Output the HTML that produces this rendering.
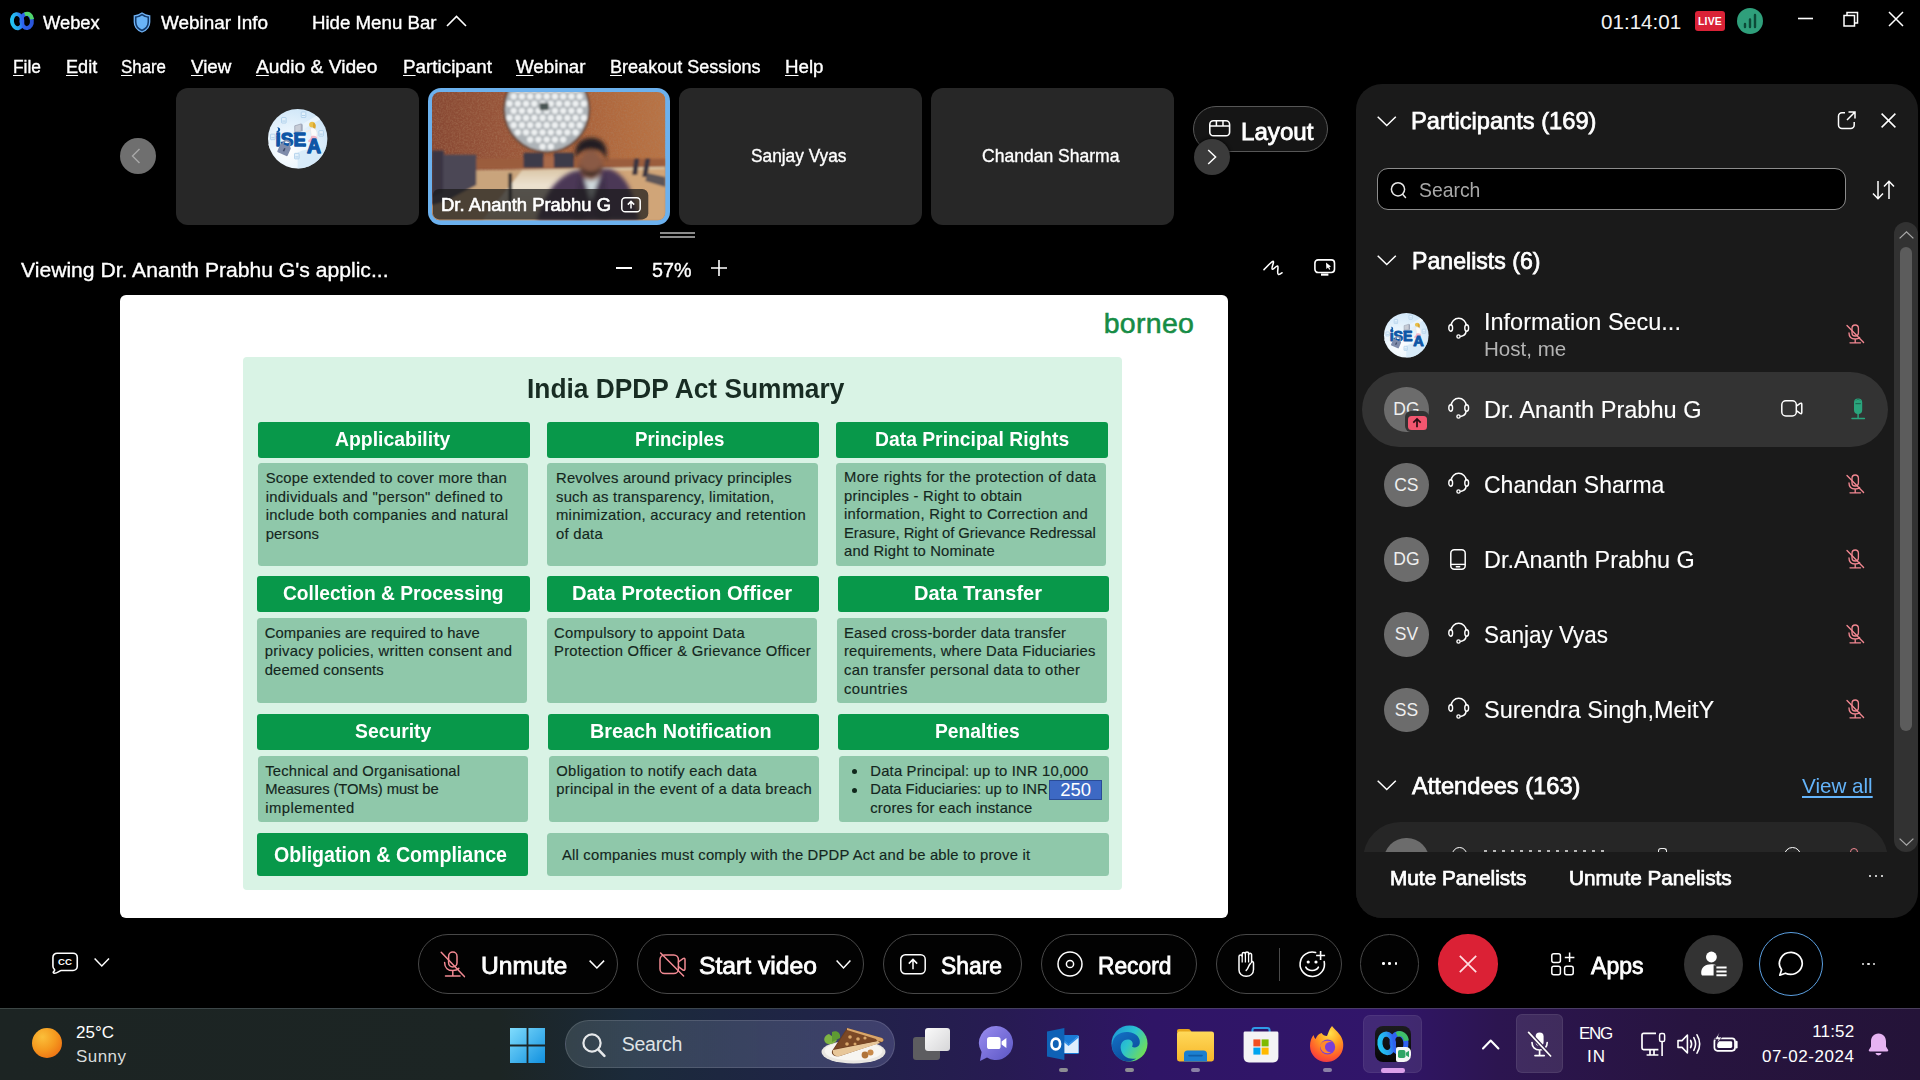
<!DOCTYPE html>
<html lang="en">
<head>
<meta charset="utf-8">
<title>Webex</title>
<style>
*{box-sizing:border-box;margin:0;padding:0}
html,body{width:1920px;height:1080px;overflow:hidden;background:#000;}
body{position:relative;font-family:"Liberation Sans",sans-serif;color:#fff;}
.a{position:absolute;white-space:nowrap;}
.t{position:absolute;white-space:nowrap;line-height:1;-webkit-text-stroke:0.35px currentColor;}
svg{position:absolute;overflow:visible;}
u{text-decoration-thickness:1.2px;text-underline-offset:2px;}

/* tiles */
.tile{position:absolute;top:88px;height:137px;width:243px;border-radius:12px;background:#272727;}
/* slide */
#slide{position:absolute;left:120px;top:295px;width:1108px;height:623px;background:#fff;border-radius:6px;overflow:hidden;}
#gbox{position:absolute;left:123.4px;top:62.2px;width:878.8px;height:532.6px;background:#d9f3e5;border-radius:4px;}
.h{position:absolute;background:#08984a;border-radius:3px;color:#fff;font-weight:bold;text-align:center;white-space:nowrap;}
.b{position:absolute;background:#8fc8aa;border-radius:3.5px;color:#10281c;}
.bt{position:absolute;white-space:nowrap;line-height:1;color:#14261d;-webkit-text-stroke:0.15px currentColor;}
.ht{position:absolute;white-space:nowrap;line-height:1;color:#fff;font-weight:bold;}

/* panel */
#panel{position:absolute;left:1356px;top:84px;width:1562px;height:834px;background:#1a1a1a;border-radius:26px;width:562px;overflow:hidden;}
.av{position:absolute;width:44px;height:44px;border-radius:50%;background:#6c6c6c;color:#efefef;font-size:17.5px;text-align:center;line-height:44px;}
.nm{position:absolute;white-space:nowrap;font-size:24.5px;line-height:1;color:#fff;-webkit-text-stroke:0.12px currentColor;}

.nb{position:absolute;white-space:nowrap;line-height:1;color:#fff;-webkit-text-stroke:0.75px #fff;}
/* controls */
.pill{position:absolute;top:934px;height:59.8px;border-radius:30px;border:1.7px solid #484848;background:#020202;}
.pl{position:absolute;white-space:nowrap;line-height:1;color:#fff;-webkit-text-stroke:0.8px #fff;}

/* taskbar */
#tb{position:absolute;left:0;top:1008px;width:1920px;height:72px;background:linear-gradient(90deg,#1c2423 0%,#1c2524 26%,#1b2a3a 33%,#1f2446 42%,#271b52 52%,#2f1566 60%,#31156a 72%,#2c1550 78%,#27143f 88%,#241338 100%);}
#tb::before{content:"";position:absolute;left:0;top:0;width:100%;height:1.3px;background:linear-gradient(90deg,#3c4644 0%,#3c4650 40%,#4a3a6c 65%,#4a3f5c 100%);}
</style>
</head>
<body>

<!-- TOPBAR -->
<div id="topbar">
<svg style="left:9px;top:11px" width="26" height="20" viewBox="0 0 26 20">
 <defs><linearGradient id="wg" x1="0" y1="0" x2="1" y2="0"><stop offset="0" stop-color="#22c3f2"/><stop offset="0.55" stop-color="#27a4ee"/><stop offset="1" stop-color="#2f62f0"/></linearGradient>
 <linearGradient id="wg2" x1="0" y1="0" x2="1" y2="0"><stop offset="0" stop-color="#2f62f0"/><stop offset="1" stop-color="#2a55d8"/></linearGradient></defs>
 <ellipse cx="17.6" cy="10" rx="5.3" ry="7.1" fill="none" stroke="url(#wg2)" stroke-width="3.9" transform="rotate(-6 17.6 10)"/>
 <path d="M15.8 3.4 C19.6 1.6 22.8 4.2 23.2 8.2" fill="none" stroke="#4fd56c" stroke-width="3.9" stroke-linecap="butt"/>
 <ellipse cx="8.2" cy="10.2" rx="5.2" ry="7.1" fill="none" stroke="url(#wg)" stroke-width="3.9" transform="rotate(-8 8.2 10.2)"/>
</svg>
<div class="t" style="transform:scaleX(1.0470);transform-origin:0 0;left:42.5px;top:15.1px;font-size:17.5px">Webex</div>
<svg style="left:133px;top:12px" width="18" height="21" viewBox="0 0 18 21"><path d="M9 1 C6.5 3 4 3.6 1.3 3.8 V10 C1.3 15 4.5 18.3 9 20 C13.5 18.3 16.7 15 16.7 10 V3.8 C14 3.6 11.5 3 9 1Z" fill="#123a6b" stroke="#6fb2f5" stroke-width="1.3"/><path d="M9 3.6 C7.2 4.9 5.5 5.5 3.5 5.7 V10 C3.5 13.7 5.7 16.2 9 17.6 C12.3 16.2 14.5 13.7 14.5 10 V5.7 C12.5 5.5 10.8 4.9 9 3.6Z" fill="#6ab4f7"/></svg>
<div class="t" style="transform:scaleX(1.0818);transform-origin:0 0;left:160.5px;top:15.1px;font-size:17.5px">Webinar Info</div>
<div class="t" style="transform:scaleX(1.0665);transform-origin:0 0;left:312.0px;top:15.1px;font-size:17.5px">Hide Menu Bar</div>
<svg style="left:446px;top:15px" width="21" height="12" viewBox="0 0 21 12"><path d="M1 11 L10.5 1.5 L20 11" fill="none" stroke="#fff" stroke-width="1.6"/></svg>
<div class="a" style="left:1601px;top:11px;font-size:20.6px;line-height:22px;color:#f2f2f2">01:14:01</div>
<div class="a" style="left:1695px;top:11px;width:30px;height:20px;border-radius:3px;background:#da2237;font-size:10.5px;font-weight:bold;line-height:20px;text-align:center;letter-spacing:0.2px">LIVE</div>
<div class="a" style="left:1737px;top:8px;width:26px;height:26px;border-radius:50%;background:#2f9f7b"></div>
<svg style="left:1743px;top:13px" width="14" height="15" viewBox="0 0 14 15"><path d="M2 14 V11 M7 14 V6.5 M12 14 V2" stroke="#0d4a38" stroke-width="2.4" stroke-linecap="round"/></svg>
<svg style="left:1798px;top:17px" width="15" height="3" viewBox="0 0 15 3"><path d="M0 1.5 H15" stroke="#fff" stroke-width="1.6"/></svg>
<svg style="left:1843px;top:11px" width="16" height="16" viewBox="0 0 16 16"><path d="M1 4.5 H11.5 V15 H1 Z M4 4.5 V1.5 H14.5 V12 H11.5" fill="none" stroke="#fff" stroke-width="1.5"/></svg>
<svg style="left:1888px;top:11px" width="16" height="16" viewBox="0 0 16 16"><path d="M1 1 L15 15 M15 1 L1 15" stroke="#fff" stroke-width="1.5"/></svg>
</div>
<!-- MENUBAR -->
<div id="menubar">
<div class="t" style="transform:scaleX(0.9922);transform-origin:0 0;left:12.5px;top:59.1px;font-size:17.5px"><u>F</u>ile</div>
<div class="t" style="transform:scaleX(1.0341);transform-origin:0 0;left:65.5px;top:59.1px;font-size:17.5px"><u>E</u>dit</div>
<div class="t" style="transform:scaleX(0.9632);transform-origin:0 0;left:121.3px;top:59.1px;font-size:17.5px"><u>S</u>hare</div>
<div class="t" style="transform:scaleX(1.0738);transform-origin:0 0;left:191.3px;top:59.1px;font-size:17.5px"><u>V</u>iew</div>
<div class="t" style="transform:scaleX(1.0983);transform-origin:0 0;left:256.0px;top:59.1px;font-size:17.5px"><u>A</u>udio &amp; Video</div>
<div class="t" style="transform:scaleX(1.0761);transform-origin:0 0;left:402.5px;top:59.1px;font-size:17.5px"><u>P</u>articipant</div>
<div class="t" style="transform:scaleX(1.0715);transform-origin:0 0;left:516.0px;top:59.1px;font-size:17.5px"><u>W</u>ebinar</div>
<div class="t" style="transform:scaleX(1.0313);transform-origin:0 0;left:610.0px;top:59.1px;font-size:17.5px"><u>B</u>reakout Sessions</div>
<div class="t" style="transform:scaleX(1.0694);transform-origin:0 0;left:785.0px;top:59.1px;font-size:17.5px"><u>H</u>elp</div>
</div>
<!-- TILES -->
<div id="tiles">
<div class="a" style="left:120px;top:138px;width:36px;height:36px;border-radius:50%;background:#6f6f6f"></div>
<svg style="left:131px;top:148px" width="10" height="16" viewBox="0 0 10 16"><path d="M8.5 1 L1.5 8 L8.5 15" fill="none" stroke="#a9a9a9" stroke-width="1.4"/></svg>
<div class="tile" style="left:176px"></div>
<svg style="left:267.7px;top:108.7px" width="59.4" height="59.4" viewBox="0 0 60 60">
 <defs><radialGradient id="ig1" cx="0.35" cy="0.7" r="0.75"><stop offset="0" stop-color="#ffffff"/><stop offset="0.45" stop-color="#eaf5fd"/><stop offset="1" stop-color="#cfe6f8"/></radialGradient><clipPath id="ic1"><circle cx="30" cy="30" r="30"/></clipPath></defs>
 <circle cx="30" cy="30" r="30" fill="url(#ig1)"/>
 <g clip-path="url(#ic1)"><path d="M-2 40 L62 2" stroke="#e9f4fc" stroke-width="5"/><path d="M30 44 C40 38 50 44 62 36 V62 H30Z" fill="#d3e8f8" opacity="0.8"/></g>
 <rect x="13.7" y="8.6" width="4.6" height="5.6" rx="0.6" fill="#e3f1fb" stroke="#9fc6e6" stroke-width="0.7"/><path d="M14.5 12.2 H17.5" stroke="#9fc6e6" stroke-width="0.8"/><rect x="33.6" y="3" width="4.6" height="5.6" rx="0.6" fill="#e3f1fb" stroke="#9fc6e6" stroke-width="0.7"/><path d="M34.4 6.6 H37.4" stroke="#9fc6e6" stroke-width="0.8"/><rect x="51.4" y="21.8" width="4.6" height="5.6" rx="0.6" fill="#e3f1fb" stroke="#9fc6e6" stroke-width="0.7"/><path d="M52.199999999999996 25.400000000000002 H55.199999999999996" stroke="#9fc6e6" stroke-width="0.8"/><rect x="2.6" y="25.4" width="4.6" height="5.6" rx="0.6" fill="#e3f1fb" stroke="#9fc6e6" stroke-width="0.7"/><path d="M3.4000000000000004 29.0 H6.4" stroke="#9fc6e6" stroke-width="0.8"/><rect x="26.8" y="44.8" width="4.6" height="5.6" rx="0.6" fill="#e3f1fb" stroke="#9fc6e6" stroke-width="0.7"/><path d="M27.6 48.4 H30.6" stroke="#9fc6e6" stroke-width="0.8"/>
 <path d="M27 17 L33.6 15 V22.4 L27 23Z" fill="#c7ccd6" stroke="#8a92a4" stroke-width="0.6"/><path d="M33.6 15 L35 15.6 V22.6 L33.6 22.4Z" fill="#9aa2b4"/>
 <path d="M26 24.6 H37.6" stroke="#0d56a6" stroke-width="1.3"/><path d="M36 24.4 L42 21.6" stroke="#f3e9e2" stroke-width="1.4"/>
 <ellipse cx="44.6" cy="15.8" rx="3" ry="2.8" fill="#e9c04a"/><path d="M45.6 14 C48.6 14 48.8 18 47.4 20.4 L45.4 19Z" fill="#d9a62e"/>
 <path d="M42.6 19.4 C46 18.4 49.6 20.4 49.6 25 L49 30 L44 30 L43.4 24Z" fill="#fbfbfb" stroke="#e2d6d6" stroke-width="0.4"/>
 <path d="M43.6 27.6 C47 26.4 50.4 27.6 49.8 30.6 C48.6 33 44 33 41 33.6 L40.4 32 C42 31 43.4 30 43.6 27.6Z" fill="#f1b6c8"/>
 <text x="7.6" y="37.8" style="font:bold 19.3px 'Liberation Sans',sans-serif" fill="#0d56a6" stroke="#0d56a6" stroke-width="1.3" stroke-linejoin="round" textLength="30.8" lengthAdjust="spacingAndGlyphs">iSE</text>
 <rect x="35.4" y="35.4" width="2.6" height="2.4" fill="#0d56a6"/>
 <text x="39.4" y="44.2" style="font:bold 19.6px 'Liberation Sans',sans-serif" fill="#0d56a6" stroke="#0d56a6" stroke-width="1.3" stroke-linejoin="round">A</text>
 <path d="M9.2 18.4 C12.8 18 13.6 22.6 10 23.4 C8.6 23.6 8 23 8 23 C10.6 22.4 10.8 19.6 9.2 18.4Z" fill="#0d56a6"/>
 <g transform="rotate(24 16.2 41)"><rect x="10.6" y="36.4" width="11.4" height="9.6" rx="1" fill="#7f8cab"/><path d="M12.8 36.6 V34.6 A3.4 3.4 0 0 1 19.6 34.6 V36.6" fill="none" stroke="#7f8cab" stroke-width="1.8"/><rect x="15.6" y="39.4" width="1.6" height="3.4" fill="#3f4a68"/></g>
</svg>
<div class="tile" id="vt" style="left:428px;width:242px;background:#6cb1ee;border-radius:13px"></div>
<svg style="left:432.3px;top:92.3px;border-radius:8.5px" width="233.4" height="128.4" viewBox="0 0 232 127" preserveAspectRatio="none">
<defs>
<linearGradient id="vw" x1="0" y1="0" x2="1" y2="0"><stop offset="0" stop-color="#874833"/><stop offset="0.3" stop-color="#98553a"/><stop offset="0.6" stop-color="#a8613b"/><stop offset="0.85" stop-color="#b46d40"/><stop offset="1" stop-color="#b87446"/></linearGradient>
<linearGradient id="vt2" x1="0" y1="0" x2="0" y2="1"><stop offset="0" stop-color="#d9c3a2"/><stop offset="0.35" stop-color="#ece2d0"/><stop offset="1" stop-color="#d8c4a4"/></linearGradient>
<filter id="vb" x="-5%" y="-5%" width="110%" height="110%"><feGaussianBlur stdDeviation="1.1"/></filter>
<filter id="vb2" x="-10%" y="-10%" width="120%" height="120%"><feGaussianBlur stdDeviation="2"/></filter>
<filter id="vn" x="0" y="0" width="100%" height="100%"><feTurbulence type="fractalNoise" baseFrequency="0.55" numOctaves="2" seed="4" result="n"/><feColorMatrix type="matrix" values="0 0 0 0 0.42  0 0 0 0 0.22  0 0 0 0 0.12  0.6 0.6 0 0 -0.5"/></filter>
<clipPath id="vc"><rect x="0" y="0" width="232" height="127" rx="8"/></clipPath>
</defs>
<g clip-path="url(#vc)">
<rect width="232" height="127" fill="url(#vw)"/>
<rect width="232" height="80" filter="url(#vn)"/>
<g filter="url(#vb)">
 <circle cx="114" cy="17" r="43.5" fill="#6b4a3a"/>
 <circle cx="114" cy="17" r="41.5" fill="#aeb4b8"/>
 <g fill="#eef1f2"><circle cx="101.7" cy="-16.9" r="3.1"/><circle cx="109.9" cy="-16.9" r="3.1"/><circle cx="118.1" cy="-16.9" r="3.1"/><circle cx="126.3" cy="-16.9" r="3.1"/><circle cx="89.4" cy="-9.8" r="3.1"/><circle cx="97.6" cy="-9.8" r="3.1"/><circle cx="105.8" cy="-9.8" r="3.1"/><circle cx="114.0" cy="-9.8" r="3.1"/><circle cx="122.2" cy="-9.8" r="3.1"/><circle cx="130.4" cy="-9.8" r="3.1"/><circle cx="138.6" cy="-9.8" r="3.1"/><circle cx="85.3" cy="-2.7" r="3.1"/><circle cx="93.5" cy="-2.7" r="3.1"/><circle cx="101.7" cy="-2.7" r="3.1"/><circle cx="109.9" cy="-2.7" r="3.1"/><circle cx="118.1" cy="-2.7" r="3.1"/><circle cx="126.3" cy="-2.7" r="3.1"/><circle cx="134.5" cy="-2.7" r="3.1"/><circle cx="142.7" cy="-2.7" r="3.1"/><circle cx="81.2" cy="4.4" r="3.1"/><circle cx="89.4" cy="4.4" r="3.1"/><circle cx="97.6" cy="4.4" r="3.1"/><circle cx="105.8" cy="4.4" r="3.1"/><circle cx="114.0" cy="4.4" r="3.1"/><circle cx="122.2" cy="4.4" r="3.1"/><circle cx="130.4" cy="4.4" r="3.1"/><circle cx="138.6" cy="4.4" r="3.1"/><circle cx="146.8" cy="4.4" r="3.1"/><circle cx="77.1" cy="11.5" r="3.1"/><circle cx="85.3" cy="11.5" r="3.1"/><circle cx="93.5" cy="11.5" r="3.1"/><circle cx="101.7" cy="11.5" r="3.1"/><circle cx="109.9" cy="11.5" r="3.1"/><circle cx="118.1" cy="11.5" r="3.1"/><circle cx="126.3" cy="11.5" r="3.1"/><circle cx="134.5" cy="11.5" r="3.1"/><circle cx="142.7" cy="11.5" r="3.1"/><circle cx="150.9" cy="11.5" r="3.1"/><circle cx="81.2" cy="18.6" r="3.1"/><circle cx="89.4" cy="18.6" r="3.1"/><circle cx="97.6" cy="18.6" r="3.1"/><circle cx="105.8" cy="18.6" r="3.1"/><circle cx="114.0" cy="18.6" r="3.1"/><circle cx="122.2" cy="18.6" r="3.1"/><circle cx="130.4" cy="18.6" r="3.1"/><circle cx="138.6" cy="18.6" r="3.1"/><circle cx="146.8" cy="18.6" r="3.1"/><circle cx="77.1" cy="25.7" r="3.1"/><circle cx="85.3" cy="25.7" r="3.1"/><circle cx="93.5" cy="25.7" r="3.1"/><circle cx="101.7" cy="25.7" r="3.1"/><circle cx="109.9" cy="25.7" r="3.1"/><circle cx="118.1" cy="25.7" r="3.1"/><circle cx="126.3" cy="25.7" r="3.1"/><circle cx="134.5" cy="25.7" r="3.1"/><circle cx="142.7" cy="25.7" r="3.1"/><circle cx="150.9" cy="25.7" r="3.1"/><circle cx="81.2" cy="32.8" r="3.1"/><circle cx="89.4" cy="32.8" r="3.1"/><circle cx="97.6" cy="32.8" r="3.1"/><circle cx="105.8" cy="32.8" r="3.1"/><circle cx="114.0" cy="32.8" r="3.1"/><circle cx="122.2" cy="32.8" r="3.1"/><circle cx="130.4" cy="32.8" r="3.1"/><circle cx="138.6" cy="32.8" r="3.1"/><circle cx="146.8" cy="32.8" r="3.1"/><circle cx="85.3" cy="39.9" r="3.1"/><circle cx="93.5" cy="39.9" r="3.1"/><circle cx="101.7" cy="39.9" r="3.1"/><circle cx="109.9" cy="39.9" r="3.1"/><circle cx="118.1" cy="39.9" r="3.1"/><circle cx="126.3" cy="39.9" r="3.1"/><circle cx="134.5" cy="39.9" r="3.1"/><circle cx="142.7" cy="39.9" r="3.1"/><circle cx="97.6" cy="47.0" r="3.1"/><circle cx="105.8" cy="47.0" r="3.1"/><circle cx="114.0" cy="47.0" r="3.1"/><circle cx="122.2" cy="47.0" r="3.1"/><circle cx="130.4" cy="47.0" r="3.1"/><circle cx="109.9" cy="54.1" r="3.1"/><circle cx="118.1" cy="54.1" r="3.1"/></g>
 <rect x="107" y="11" width="9" height="7" rx="1" fill="#4a5452"/>
 <!-- floor/wall base -->
 <rect x="0" y="66" width="232" height="10" fill="#9b5d3c"/>
 <!-- table -->
 <path d="M30 78 L232 74 V127 H0 V100Z" fill="url(#vt2)"/>
 <path d="M0 100 L30 78 L90 77 L50 127 H0Z" fill="#c9a47c"/>
 <path d="M170 78 L232 76 V127 H205Z" fill="#d0a578"/>
 <!-- back chairs -->
 <rect x="91" y="60" width="20" height="15" rx="1.5" fill="#3d3a48"/>
 <rect x="121" y="60" width="20" height="15" rx="1.5" fill="#3d3a48"/>
 <rect x="111" y="64" width="10" height="11" fill="#a8694a"/>
 <!-- left chairs -->
 <path d="M0 58 H12 V62 H44 V92 L14 108 L0 112Z" fill="#4b4654"/>
 <path d="M0 58 H11 V100 L0 104Z" fill="#3a3642"/>
 <!-- right chairs -->
 <path d="M201 66 L206 66 L204 82 L199 82Z M212 66 L217 66 L214 84 L209 84Z" fill="#3a3640"/>
 <path d="M214 80 L232 84 V94 L212 88Z" fill="#5c5458"/>
 <!-- mic stand -->
 <rect x="76" y="80" width="3.6" height="36" rx="1" fill="#2a2a2e"/>
</g>
<g filter="url(#vb2)">
 <!-- person body -->
 <path d="M104 127 C112 100 124 84 142 78 L176 76 C194 82 200 100 206 127Z" fill="#4c3757"/>
 <path d="M150 80 L158 108 L168 80Z" fill="#cfd9dc"/>
 <path d="M146 78 L156 112 L150 127 H140Z M172 78 L160 112 L166 127 H176Z" fill="#41304c"/>
 <!-- neck/face -->
 <g transform="translate(0 4.5)">
 <ellipse cx="158" cy="68" rx="11.5" ry="15" fill="#8a5a44"/>
 <path d="M146.5 66 C146.5 84 169.5 84 169.5 66 C167 77 149 77 146.5 66Z" fill="#3a2a26"/>
 <path d="M143 62 C140 46 150 40 160 41 C171 42 176 51 172.6 64 C171 55 167 52.5 158 52.5 C151 52.5 145 55 143 62Z" fill="#231d20"/>
 </g>
</g>
<!-- label -->
<rect x="1" y="96" width="214" height="30" rx="6" fill="#1a1a1a" fill-opacity="0.72"/>
</g>
</svg>
<div class="a" style="transform:scaleX(1.0526);transform-origin:0 0;left:441px;top:196.5px;font-size:17.5px;line-height:1;color:#fff;-webkit-text-stroke:0.6px #fff">Dr. Ananth Prabhu G</div>
<svg style="left:621px;top:196.6px" width="20" height="16" viewBox="0 0 20 16"><rect x="0.8" y="0.8" width="18.4" height="14" rx="3.4" fill="none" stroke="#fff" stroke-width="1.5"/><path d="M10 11.6 V4.6 M6.8 7.6 L10 4.4 L13.2 7.6" fill="none" stroke="#fff" stroke-width="1.5"/></svg>
<div class="tile" style="left:679px"></div>
<div class="t" style="transform:scaleX(0.9726);transform-origin:0 0;left:751.0px;top:147.6px;font-size:17.8px">Sanjay Vyas</div>
<div class="tile" style="left:931px"></div>
<div class="t" style="transform:scaleX(0.9864);transform-origin:0 0;left:982.0px;top:147.6px;font-size:17.8px">Chandan Sharma</div>
<div class="a" style="left:1193px;top:105.7px;width:135px;height:46.3px;border-radius:23.2px;border:1.4px solid #575757;background:#151515"></div>
<svg style="left:1208.5px;top:120.4px" width="21.4" height="16.6" viewBox="0 0 21.4 16.6"><rect x="0.8" y="0.8" width="19.8" height="15" rx="3.6" fill="none" stroke="#fff" stroke-width="1.6"/><path d="M0.8 6 H20.6 M7.4 1 V6 M14 1 V6" stroke="#fff" stroke-width="1.5"/></svg>
<div class="a" style="transform:scaleX(1.0275);transform-origin:0 0;left:1241px;top:120.6px;font-size:23.5px;line-height:1;-webkit-text-stroke:0.8px #fff">Layout</div>
<div class="a" style="left:1193.5px;top:138.7px;width:36px;height:36px;border-radius:50%;background:#3b3b3b;box-shadow:0 0 3px 1px rgba(0,0,0,.6)"></div>
<svg style="left:1207px;top:148.7px" width="10" height="16" viewBox="0 0 10 16"><path d="M1.2 1 L8.6 8 L1.2 15" fill="none" stroke="#fff" stroke-width="1.5"/></svg>
<div class="a" style="left:660px;top:232px;width:35px;height:1.5px;background:#8a8a8a"></div>
<div class="a" style="left:660px;top:236px;width:35px;height:1.5px;background:#8a8a8a"></div>
</div>
<!-- VIEWBAR -->
<div id="viewbar">
<div class="t" style="transform:scaleX(1.0300);transform-origin:0 0;left:21.0px;top:260.0px;font-size:20.5px">Viewing Dr. Ananth Prabhu G's applic...</div>
<div class="a" style="left:616px;top:267px;width:16px;height:1.6px;background:#fff"></div>
<div class="t" style="transform:scaleX(0.9627);transform-origin:0 0;left:651.5px;top:259.5px;font-size:20.5px">57%</div>
<svg style="left:711px;top:260px" width="16" height="16" viewBox="0 0 16 16"><path d="M0 8 H16 M8 0 V16" stroke="#fff" stroke-width="1.6"/></svg>
<svg style="left:1263px;top:260px" width="20" height="16" viewBox="0 0 20 16"><path d="M1 9.6 C4.6 6 8.6 1.4 10 1.4 C11.8 1.6 7.6 8.6 9.4 9.2 C11 9.6 13.2 5.4 14.6 6 C16 6.8 13.4 13.4 15.4 14.4 C16.6 14.8 18 13.6 19 12.8" fill="none" stroke="#fff" stroke-width="1.6" stroke-linecap="round"/></svg>
<svg style="left:1313.5px;top:259.2px" width="21.4" height="17" viewBox="0 0 21.4 17"><rect x="0.9" y="0.9" width="19.6" height="12.6" rx="3.2" fill="none" stroke="#fff" stroke-width="1.6"/><path d="M7 15.6 H14.4" stroke="#fff" stroke-width="2.2"/><path d="M12 3.6 L12.4 10 L14 8.6 L15.2 10.8 L16.2 10.2 L15.2 8.2 L17 7.6 Z" fill="#fff"/></svg>
</div>
<!-- SLIDE -->
<div id="slide">
<div id="gbox"></div>
<div class="a" style="letter-spacing:0.290px;left:983.7px;top:14px;font-size:28.5px;line-height:1;color:#168c45;-webkit-text-stroke:0.55px #168c45">borneo</div>
<div class="ht" style="transform:scaleX(0.9397);transform-origin:0 0;left:406.7px;top:79.8px;font-size:28px;color:#182c23">India DPDP Act Summary</div>
<div class="h" style="left:138.3px;top:127.0px;width:271.7px;height:35.7px"></div>
<div class="ht" style="transform:scaleX(0.9242);transform-origin:0 0;left:215.3px;top:133.2px;font-size:21px">Applicability</div>
<div class="h" style="left:427.3px;top:127.0px;width:271.7px;height:35.7px"></div>
<div class="ht" style="transform:scaleX(0.8895);transform-origin:0 0;left:515.0px;top:133.2px;font-size:21px">Principles</div>
<div class="h" style="left:716.0px;top:127.0px;width:271.7px;height:35.7px"></div>
<div class="ht" style="transform:scaleX(0.9199);transform-origin:0 0;left:755.0px;top:133.2px;font-size:21px">Data Principal Rights</div>
<div class="b" style="left:138.3px;top:168.0px;width:269.7px;height:102.7px"></div>
<div class="b" style="left:427.3px;top:168.0px;width:270.4px;height:102.7px"></div>
<div class="b" style="left:716.0px;top:168.0px;width:270.3px;height:102.7px"></div>
<div class="bt" style="letter-spacing:0.205px;left:145.7px;top:175.9px;font-size:14.8px">Scope extended to cover more than</div>
<div class="bt" style="letter-spacing:0.298px;left:145.7px;top:194.6px;font-size:14.8px">individuals and "person" defined to</div>
<div class="bt" style="letter-spacing:0.263px;left:145.7px;top:213.2px;font-size:14.8px">include both companies and natural</div>
<div class="bt" style="letter-spacing:0.107px;left:145.7px;top:231.9px;font-size:14.8px">persons</div>
<div class="bt" style="letter-spacing:0.214px;left:436.0px;top:175.9px;font-size:14.8px">Revolves around privacy principles</div>
<div class="bt" style="letter-spacing:0.242px;left:436.0px;top:194.6px;font-size:14.8px">such as transparency, limitation,</div>
<div class="bt" style="letter-spacing:0.273px;left:436.0px;top:213.2px;font-size:14.8px">minimization, accuracy and retention</div>
<div class="bt" style="letter-spacing:0.239px;left:436.0px;top:231.9px;font-size:14.8px">of data</div>
<div class="bt" style="letter-spacing:0.364px;left:724.0px;top:175.2px;font-size:14.8px">More rights for the protection of data</div>
<div class="bt" style="letter-spacing:0.256px;left:724.0px;top:193.6px;font-size:14.8px">principles - Right to obtain</div>
<div class="bt" style="letter-spacing:0.289px;left:724.0px;top:212.2px;font-size:14.8px">information, Right to Correction and</div>
<div class="bt" style="letter-spacing:-0.045px;left:724.0px;top:230.9px;font-size:14.8px">Erasure, Right of Grievance Redressal</div>
<div class="bt" style="letter-spacing:0.173px;left:724.0px;top:249.2px;font-size:14.8px">and Right to Nominate</div>
<div class="h" style="left:137.3px;top:281.3px;width:272.4px;height:35.7px"></div>
<div class="ht" style="transform:scaleX(0.9132);transform-origin:0 0;left:162.7px;top:287.4px;font-size:21px">Collection &amp; Processing</div>
<div class="h" style="left:427.3px;top:281.3px;width:271.7px;height:35.7px"></div>
<div class="ht" style="transform:scaleX(0.9619);transform-origin:0 0;left:451.7px;top:287.4px;font-size:21px">Data Protection Officer</div>
<div class="h" style="left:717.7px;top:281.3px;width:271.3px;height:35.7px"></div>
<div class="ht" style="transform:scaleX(0.9536);transform-origin:0 0;left:794.3px;top:287.4px;font-size:21px">Data Transfer</div>
<div class="b" style="left:137.3px;top:322.7px;width:270.0px;height:85.6px"></div>
<div class="b" style="left:426.7px;top:322.7px;width:270.0px;height:85.6px"></div>
<div class="b" style="left:716.7px;top:322.7px;width:270.3px;height:85.6px"></div>
<div class="bt" style="letter-spacing:0.124px;left:144.7px;top:330.6px;font-size:14.8px">Companies are required to have</div>
<div class="bt" style="letter-spacing:0.290px;left:144.7px;top:349.2px;font-size:14.8px">privacy policies, written consent and</div>
<div class="bt" style="letter-spacing:0.156px;left:144.7px;top:367.9px;font-size:14.8px">deemed consents</div>
<div class="bt" style="letter-spacing:0.291px;left:434.0px;top:330.6px;font-size:14.8px">Compulsory to appoint Data</div>
<div class="bt" style="letter-spacing:0.262px;left:434.0px;top:349.2px;font-size:14.8px">Protection Officer &amp; Grievance Officer</div>
<div class="bt" style="letter-spacing:0.183px;left:724.0px;top:330.6px;font-size:14.8px">Eased cross-border data transfer</div>
<div class="bt" style="letter-spacing:0.154px;left:724.0px;top:349.2px;font-size:14.8px">requirements, where Data Fiduciaries</div>
<div class="bt" style="letter-spacing:0.288px;left:724.0px;top:367.9px;font-size:14.8px">can transfer personal data to other</div>
<div class="bt" style="letter-spacing:0.407px;left:724.0px;top:386.6px;font-size:14.8px">countries</div>
<div class="h" style="left:137.3px;top:419.3px;width:271.7px;height:35.7px"></div>
<div class="ht" style="transform:scaleX(0.9207);transform-origin:0 0;left:235.0px;top:425.4px;font-size:21px">Security</div>
<div class="h" style="left:427.7px;top:419.3px;width:271.3px;height:35.7px"></div>
<div class="ht" style="transform:scaleX(0.9437);transform-origin:0 0;left:470.0px;top:425.4px;font-size:21px">Breach Notification</div>
<div class="h" style="left:717.7px;top:419.3px;width:271.3px;height:35.7px"></div>
<div class="ht" style="transform:scaleX(0.9174);transform-origin:0 0;left:814.7px;top:425.4px;font-size:21px">Penalties</div>
<div class="b" style="left:138.0px;top:460.7px;width:269.7px;height:66.6px"></div>
<div class="b" style="left:429.0px;top:460.7px;width:270.0px;height:66.6px"></div>
<div class="b" style="left:719.0px;top:460.7px;width:270.3px;height:66.6px"></div>
<div class="bt" style="letter-spacing:0.173px;left:145.3px;top:468.6px;font-size:14.8px">Technical and Organisational</div>
<div class="bt" style="letter-spacing:-0.104px;left:145.3px;top:487.2px;font-size:14.8px">Measures (TOMs) must be</div>
<div class="bt" style="letter-spacing:0.428px;left:145.3px;top:505.9px;font-size:14.8px">implemented</div>
<div class="bt" style="letter-spacing:0.301px;left:436.3px;top:468.6px;font-size:14.8px">Obligation to notify each data</div>
<div class="bt" style="letter-spacing:0.227px;left:436.3px;top:487.2px;font-size:14.8px">principal in the event of a data breach</div>
<div class="bt" style="letter-spacing:0.186px;left:750.3px;top:468.6px;font-size:14.8px">Data Principal: up to INR 10,000</div>
<div class="bt" style="letter-spacing:-0.009px;left:750.3px;top:487.2px;font-size:14.8px">Data Fiduciaries: up to INR</div>
<div class="bt" style="letter-spacing:0.177px;left:750.3px;top:505.9px;font-size:14.8px">crores for each instance</div>
<div class="a" style="left:731.5px;top:474px;width:5px;height:5px;border-radius:50%;background:#10281c"></div>
<div class="a" style="left:731.5px;top:492.5px;width:5px;height:5px;border-radius:50%;background:#10281c"></div>
<div class="a" style="left:929px;top:485.3px;width:53px;height:19.7px;background:#3d69c4;border:1px solid #2a4b96"></div>
<div class="a" style="letter-spacing:-0.088px;left:940.3px;top:485.8px;font-size:18.5px;line-height:1;color:#fff">250</div>
<div class="h" style="left:137.0px;top:538.3px;width:271.3px;height:43.0px"></div>
<div class="ht" style="transform:scaleX(0.8709);transform-origin:0 0;left:154.0px;top:549.0px;font-size:22.5px">Obligation &amp; Compliance</div>
<div class="b" style="left:427.3px;top:538.3px;width:562.0px;height:43.0px"></div>
<div class="bt" style="letter-spacing:0.204px;left:442.0px;top:552.6px;font-size:14.8px">All companies must comply with the DPDP Act and be able to prove it</div>
</div>
<!-- PANEL -->
<div id="panel">
<svg style="left:20.7px;top:31.5px" width="19.5" height="10.5" viewBox="0 0 19.5 10.5"><path d="M0.7 0.7 L9.75 9.5 L18.8 0.7" fill="none" stroke="#fff" stroke-width="1.5"/></svg>
<div class="nb" style="transform:scaleX(0.9862);transform-origin:0 0;left:54.9px;top:25.1px;font-size:24px">Participants (169)</div>
<svg style="left:481.0px;top:26.5px" width="19" height="19" viewBox="0 0 19 19"><path d="M8 1.8 H5 A3.5 3.5 0 0 0 1.5 5.3 V14 A3.5 3.5 0 0 0 5 17.5 H13.7 A3.5 3.5 0 0 0 17.2 14 V11 M11.5 1 H18 V7.5 M18 1 L10 9" fill="none" stroke="#fff" stroke-width="1.5"/></svg>
<svg style="left:524.6px;top:28.7px" width="15" height="15" viewBox="0 0 15 15"><path d="M0.6 0.6 L14.4 14.4 M14.4 0.6 L0.6 14.4" stroke="#fff" stroke-width="1.5"/></svg>
<div class="a" style="left:21.3px;top:84.2px;width:468.5px;height:41.6px;border:1.5px solid #8c8c8c;border-radius:11px;background:#000"></div>
<svg style="left:34.0px;top:97.0px" width="18" height="18" viewBox="0 0 18 18"><circle cx="8" cy="8.3" r="6.6" fill="none" stroke="#e8e8e8" stroke-width="1.5"/><path d="M12.6 13.2 L15.5 16.4" stroke="#e8e8e8" stroke-width="1.5" stroke-linecap="round"/></svg>
<div class="a" style="transform:scaleX(0.9227);transform-origin:0 0;left:63.2px;top:95.3px;font-size:21px;line-height:1;color:#a8a8a8">Search</div>
<svg style="left:515.7px;top:95.5px" width="23" height="20" viewBox="0 0 23 20"><path d="M6 1 V18.5 M1 13.5 L6 18.7 L11 13.5 M17 19 V1.5 M12 6.5 L17 1.3 L22 6.5" fill="none" stroke="#fff" stroke-width="1.5"/></svg>
<svg style="left:20.7px;top:171.0px" width="19.5" height="10.5" viewBox="0 0 19.5 10.5"><path d="M0.7 0.7 L9.75 9.5 L18.8 0.7" fill="none" stroke="#fff" stroke-width="1.5"/></svg>
<div class="nb" style="transform:scaleX(0.9633);transform-origin:0 0;left:55.5px;top:164.5px;font-size:24px">Panelists (6)</div>
<div class="a" style="left:5.9px;top:287.6px;width:526.3px;height:75.3px;border-radius:38px;background:#333"></div>
<svg style="left:28.1px;top:228.6px" width="44.6" height="44.6" viewBox="0 0 60 60">
 <defs><radialGradient id="ig2" cx="0.35" cy="0.7" r="0.75"><stop offset="0" stop-color="#ffffff"/><stop offset="0.45" stop-color="#eaf5fd"/><stop offset="1" stop-color="#cfe6f8"/></radialGradient><clipPath id="ic2"><circle cx="30" cy="30" r="30"/></clipPath></defs>
 <circle cx="30" cy="30" r="30" fill="url(#ig2)"/>
 <g clip-path="url(#ic2)"><path d="M-2 40 L62 2" stroke="#e9f4fc" stroke-width="5"/><path d="M30 44 C40 38 50 44 62 36 V62 H30Z" fill="#d3e8f8" opacity="0.8"/></g>
 <rect x="13.7" y="8.6" width="4.6" height="5.6" rx="0.6" fill="#e3f1fb" stroke="#9fc6e6" stroke-width="0.7"/><path d="M14.5 12.2 H17.5" stroke="#9fc6e6" stroke-width="0.8"/><rect x="33.6" y="3" width="4.6" height="5.6" rx="0.6" fill="#e3f1fb" stroke="#9fc6e6" stroke-width="0.7"/><path d="M34.4 6.6 H37.4" stroke="#9fc6e6" stroke-width="0.8"/><rect x="51.4" y="21.8" width="4.6" height="5.6" rx="0.6" fill="#e3f1fb" stroke="#9fc6e6" stroke-width="0.7"/><path d="M52.199999999999996 25.400000000000002 H55.199999999999996" stroke="#9fc6e6" stroke-width="0.8"/><rect x="2.6" y="25.4" width="4.6" height="5.6" rx="0.6" fill="#e3f1fb" stroke="#9fc6e6" stroke-width="0.7"/><path d="M3.4000000000000004 29.0 H6.4" stroke="#9fc6e6" stroke-width="0.8"/><rect x="26.8" y="44.8" width="4.6" height="5.6" rx="0.6" fill="#e3f1fb" stroke="#9fc6e6" stroke-width="0.7"/><path d="M27.6 48.4 H30.6" stroke="#9fc6e6" stroke-width="0.8"/>
 <path d="M27 17 L33.6 15 V22.4 L27 23Z" fill="#c7ccd6" stroke="#8a92a4" stroke-width="0.6"/><path d="M33.6 15 L35 15.6 V22.6 L33.6 22.4Z" fill="#9aa2b4"/>
 <path d="M26 24.6 H37.6" stroke="#0d56a6" stroke-width="1.3"/><path d="M36 24.4 L42 21.6" stroke="#f3e9e2" stroke-width="1.4"/>
 <ellipse cx="44.6" cy="15.8" rx="3" ry="2.8" fill="#e9c04a"/><path d="M45.6 14 C48.6 14 48.8 18 47.4 20.4 L45.4 19Z" fill="#d9a62e"/>
 <path d="M42.6 19.4 C46 18.4 49.6 20.4 49.6 25 L49 30 L44 30 L43.4 24Z" fill="#fbfbfb" stroke="#e2d6d6" stroke-width="0.4"/>
 <path d="M43.6 27.6 C47 26.4 50.4 27.6 49.8 30.6 C48.6 33 44 33 41 33.6 L40.4 32 C42 31 43.4 30 43.6 27.6Z" fill="#f1b6c8"/>
 <text x="7.6" y="37.8" style="font:bold 19.3px 'Liberation Sans',sans-serif" fill="#0d56a6" stroke="#0d56a6" stroke-width="1.3" stroke-linejoin="round" textLength="30.8" lengthAdjust="spacingAndGlyphs">iSE</text>
 <rect x="35.4" y="35.4" width="2.6" height="2.4" fill="#0d56a6"/>
 <text x="39.4" y="44.2" style="font:bold 19.6px 'Liberation Sans',sans-serif" fill="#0d56a6" stroke="#0d56a6" stroke-width="1.3" stroke-linejoin="round">A</text>
 <path d="M9.2 18.4 C12.8 18 13.6 22.6 10 23.4 C8.6 23.6 8 23 8 23 C10.6 22.4 10.8 19.6 9.2 18.4Z" fill="#0d56a6"/>
 <g transform="rotate(24 16.2 41)"><rect x="10.6" y="36.4" width="11.4" height="9.6" rx="1" fill="#7f8cab"/><path d="M12.8 36.6 V34.6 A3.4 3.4 0 0 1 19.6 34.6 V36.6" fill="none" stroke="#7f8cab" stroke-width="1.8"/><rect x="15.6" y="39.4" width="1.6" height="3.4" fill="#3f4a68"/></g>
</svg>
<svg style="left:91.8px;top:234.0px" width="21.4" height="21" viewBox="0 0 21.4 21"><path d="M3.2 7.6 A7.5 7.3 0 0 1 18.2 7.6" fill="none" stroke="#fff" stroke-width="1.5"/><ellipse cx="2.7" cy="10" rx="1.9" ry="3.2" fill="none" stroke="#fff" stroke-width="1.4"/><ellipse cx="18.7" cy="10" rx="1.9" ry="3.2" fill="none" stroke="#fff" stroke-width="1.4"/><path d="M18.2 13.2 C17.8 16.4 15.4 18.2 12.2 18.5" fill="none" stroke="#fff" stroke-width="1.5"/><circle cx="10.5" cy="18.5" r="1.6" fill="none" stroke="#fff" stroke-width="1.4"/></svg>
<div class="nm" style="transform:scaleX(0.9775);transform-origin:0 0;left:127.6px;top:225.5px;font-size:24.0px">Information Secu...</div>
<div class="a" style="transform:scaleX(1.0033);transform-origin:0 0;left:127.6px;top:255.1px;font-size:20.5px;line-height:1;color:#b4b4b4">Host, me</div>
<svg style="left:489.2px;top:240.0px" width="20" height="20" viewBox="0 0 20 20"><rect x="7" y="1" width="6.4" height="11" rx="3.2" fill="none" stroke="#f28791" stroke-width="1.35"/><path d="M4 9 C4 13 6.6 15 10.2 15 C12 15 13.6 14.4 14.6 13.4 M10.2 15 V18.6 M5 18.8 H15.5 M2 1.5 L18.6 18.5" fill="none" stroke="#f28791" stroke-width="1.35" stroke-linecap="round"/></svg>
<div class="av" style="left:28.1px;top:303.4px;width:44.6px;height:44.6px;line-height:45px">DG</div>
<div class="a" style="left:49.3px;top:327.4px;width:23.7px;height:20.6px;border-radius:6px;background:#333"></div>
<div class="a" style="left:51.8px;top:332.2px;width:18.8px;height:14.2px;border-radius:3.5px;background:#f2566f"></div>
<svg style="left:56.2px;top:334.4px" width="10" height="10" viewBox="0 0 10 10"><path d="M5 9.3 V1.2 M1.3 4.6 L5 1 L8.7 4.6" fill="none" stroke="#2a0d14" stroke-width="1.7"/></svg>
<svg style="left:91.8px;top:313.5px" width="21.4" height="21" viewBox="0 0 21.4 21"><path d="M3.2 7.6 A7.5 7.3 0 0 1 18.2 7.6" fill="none" stroke="#fff" stroke-width="1.5"/><ellipse cx="2.7" cy="10" rx="1.9" ry="3.2" fill="none" stroke="#fff" stroke-width="1.4"/><ellipse cx="18.7" cy="10" rx="1.9" ry="3.2" fill="none" stroke="#fff" stroke-width="1.4"/><path d="M18.2 13.2 C17.8 16.4 15.4 18.2 12.2 18.5" fill="none" stroke="#fff" stroke-width="1.5"/><circle cx="10.5" cy="18.5" r="1.6" fill="none" stroke="#fff" stroke-width="1.4"/></svg>
<div class="nm" style="transform:scaleX(0.9668);transform-origin:0 0;left:127.6px;top:314.0px;font-size:24.4px">Dr. Ananth Prabhu G</div>
<svg style="left:425.4px;top:316.0px" width="22" height="17" viewBox="0 0 22 17"><rect x="0.8" y="0.8" width="14.5" height="15.2" rx="4" fill="none" stroke="#fff" stroke-width="1.5"/><path d="M15.3 6.2 L19.2 3.4 Q20.8 2.6 20.8 4.4 V12.4 Q20.8 14.2 19.2 13.4 L15.3 10.6" fill="none" stroke="#fff" stroke-width="1.5"/></svg>
<svg style="left:493.5px;top:313.6px" width="16" height="22" viewBox="0 0 16 22"><rect x="4" y="0.6" width="8.2" height="15.6" rx="4.1" fill="#2aa47c"/><path d="M5.4 5.6 H10.8" stroke="#1b6b52" stroke-width="1.2"/><path d="M6 2.6 A2.4 2.4 0 0 1 10.2 2.6" fill="none" stroke="#1f7d5f" stroke-width="1"/><path d="M8.1 16 V20 M2 20.4 H14.4" fill="none" stroke="#2aa47c" stroke-width="1.5" stroke-linecap="round"/></svg>
<div class="av" style="left:28.1px;top:378.6px;width:44.6px;height:44.6px;line-height:45px">CS</div>
<svg style="left:91.8px;top:388.9px" width="21.4" height="21" viewBox="0 0 21.4 21"><path d="M3.2 7.6 A7.5 7.3 0 0 1 18.2 7.6" fill="none" stroke="#fff" stroke-width="1.5"/><ellipse cx="2.7" cy="10" rx="1.9" ry="3.2" fill="none" stroke="#fff" stroke-width="1.4"/><ellipse cx="18.7" cy="10" rx="1.9" ry="3.2" fill="none" stroke="#fff" stroke-width="1.4"/><path d="M18.2 13.2 C17.8 16.4 15.4 18.2 12.2 18.5" fill="none" stroke="#fff" stroke-width="1.5"/><circle cx="10.5" cy="18.5" r="1.6" fill="none" stroke="#fff" stroke-width="1.4"/></svg>
<div class="nm" style="transform:scaleX(0.9436);transform-origin:0 0;left:127.6px;top:389.2px;font-size:24.4px">Chandan Sharma</div>
<svg style="left:489.2px;top:389.9px" width="20" height="20" viewBox="0 0 20 20"><rect x="7" y="1" width="6.4" height="11" rx="3.2" fill="none" stroke="#f28791" stroke-width="1.35"/><path d="M4 9 C4 13 6.6 15 10.2 15 C12 15 13.6 14.4 14.6 13.4 M10.2 15 V18.6 M5 18.8 H15.5 M2 1.5 L18.6 18.5" fill="none" stroke="#f28791" stroke-width="1.35" stroke-linecap="round"/></svg>
<div class="av" style="left:28.1px;top:453.4px;width:44.6px;height:44.6px;line-height:45px">DG</div>
<svg style="left:94.0px;top:464.9px" width="16" height="21" viewBox="0 0 16 21"><rect x="0.8" y="0.8" width="14.4" height="19.4" rx="3.5" fill="none" stroke="#fff" stroke-width="1.5"/><path d="M1 15.4 H15" stroke="#fff" stroke-width="1.4"/><path d="M6.3 17.8 H9.7" stroke="#fff" stroke-width="1.4" stroke-linecap="round"/></svg>
<div class="nm" style="transform:scaleX(0.9597);transform-origin:0 0;left:127.6px;top:464.0px;font-size:24.4px">Dr.Ananth Prabhu G</div>
<svg style="left:489.2px;top:464.7px" width="20" height="20" viewBox="0 0 20 20"><rect x="7" y="1" width="6.4" height="11" rx="3.2" fill="none" stroke="#f28791" stroke-width="1.35"/><path d="M4 9 C4 13 6.6 15 10.2 15 C12 15 13.6 14.4 14.6 13.4 M10.2 15 V18.6 M5 18.8 H15.5 M2 1.5 L18.6 18.5" fill="none" stroke="#f28791" stroke-width="1.35" stroke-linecap="round"/></svg>
<div class="av" style="left:28.1px;top:528.4px;width:44.6px;height:44.6px;line-height:45px">SV</div>
<svg style="left:91.8px;top:538.7px" width="21.4" height="21" viewBox="0 0 21.4 21"><path d="M3.2 7.6 A7.5 7.3 0 0 1 18.2 7.6" fill="none" stroke="#fff" stroke-width="1.5"/><ellipse cx="2.7" cy="10" rx="1.9" ry="3.2" fill="none" stroke="#fff" stroke-width="1.4"/><ellipse cx="18.7" cy="10" rx="1.9" ry="3.2" fill="none" stroke="#fff" stroke-width="1.4"/><path d="M18.2 13.2 C17.8 16.4 15.4 18.2 12.2 18.5" fill="none" stroke="#fff" stroke-width="1.5"/><circle cx="10.5" cy="18.5" r="1.6" fill="none" stroke="#fff" stroke-width="1.4"/></svg>
<div class="nm" style="transform:scaleX(0.9214);transform-origin:0 0;left:127.6px;top:539.0px;font-size:24.4px">Sanjay Vyas</div>
<svg style="left:489.2px;top:539.7px" width="20" height="20" viewBox="0 0 20 20"><rect x="7" y="1" width="6.4" height="11" rx="3.2" fill="none" stroke="#f28791" stroke-width="1.35"/><path d="M4 9 C4 13 6.6 15 10.2 15 C12 15 13.6 14.4 14.6 13.4 M10.2 15 V18.6 M5 18.8 H15.5 M2 1.5 L18.6 18.5" fill="none" stroke="#f28791" stroke-width="1.35" stroke-linecap="round"/></svg>
<div class="av" style="left:28.1px;top:603.6px;width:44.6px;height:44.6px;line-height:45px">SS</div>
<svg style="left:91.8px;top:613.9px" width="21.4" height="21" viewBox="0 0 21.4 21"><path d="M3.2 7.6 A7.5 7.3 0 0 1 18.2 7.6" fill="none" stroke="#fff" stroke-width="1.5"/><ellipse cx="2.7" cy="10" rx="1.9" ry="3.2" fill="none" stroke="#fff" stroke-width="1.4"/><ellipse cx="18.7" cy="10" rx="1.9" ry="3.2" fill="none" stroke="#fff" stroke-width="1.4"/><path d="M18.2 13.2 C17.8 16.4 15.4 18.2 12.2 18.5" fill="none" stroke="#fff" stroke-width="1.5"/><circle cx="10.5" cy="18.5" r="1.6" fill="none" stroke="#fff" stroke-width="1.4"/></svg>
<div class="nm" style="transform:scaleX(0.9643);transform-origin:0 0;left:127.6px;top:614.2px;font-size:24.4px">Surendra Singh,MeitY</div>
<svg style="left:489.2px;top:614.9px" width="20" height="20" viewBox="0 0 20 20"><rect x="7" y="1" width="6.4" height="11" rx="3.2" fill="none" stroke="#f28791" stroke-width="1.35"/><path d="M4 9 C4 13 6.6 15 10.2 15 C12 15 13.6 14.4 14.6 13.4 M10.2 15 V18.6 M5 18.8 H15.5 M2 1.5 L18.6 18.5" fill="none" stroke="#f28791" stroke-width="1.35" stroke-linecap="round"/></svg>
<svg style="left:20.7px;top:695.7px" width="19.5" height="10.5" viewBox="0 0 19.5 10.5"><path d="M0.7 0.7 L9.75 9.5 L18.8 0.7" fill="none" stroke="#fff" stroke-width="1.5"/></svg>
<div class="nb" style="transform:scaleX(0.9866);transform-origin:0 0;left:55.5px;top:689.7px;font-size:24px">Attendees (163)</div>
<div class="a" style="transform:scaleX(0.9822);transform-origin:0 0;left:445.9px;top:691.0px;font-size:21px;line-height:1;color:#64b4fa;text-decoration:underline;text-decoration-thickness:1.5px;text-underline-offset:2.5px">View all</div>
<div class="a" style="left:6.5px;top:738.0px;width:525.5px;height:75px;border-radius:38px;background:#262626"></div>
<div class="av" style="left:28.1px;top:753.5px;width:44.6px;height:44.6px"></div>
<div class="a" style="left:96.0px;top:762.5px;width:15px;height:15px;border-radius:50%;border:1.5px solid #fff"></div>
<div class="a" style="left:428.0px;top:762.5px;width:17px;height:17px;border-radius:50%;border:1.5px solid #fff"></div>
<div class="a" style="left:128.0px;top:766.0px;width:120px;height:3px;background:repeating-linear-gradient(90deg,#ddd 0 3px,transparent 3px 9px);opacity:.8"></div>
<div class="a" style="left:493.5px;top:764.4px;width:8px;height:10px;border-radius:4px;border:1.3px solid #f28791"></div>
<div class="a" style="left:302px;top:763.6px;width:9px;height:9px;border-radius:3px 3px 0 0;border:1.3px solid #eee;border-bottom:0"></div>
<div class="a" style="left:538.2px;top:138.0px;width:24px;height:630.4px;border-radius:12px;background:#323232"></div>
<div class="a" style="left:544.0px;top:162.9px;width:12px;height:483.7px;border-radius:6px;background:#5c5c5c"></div>
<svg style="left:542.5px;top:147.0px" width="15" height="8" viewBox="0 0 15 8"><path d="M0.6 7.4 L7.5 0.8 L14.4 7.4" fill="none" stroke="#a8a8a8" stroke-width="1.3"/></svg>
<svg style="left:542.5px;top:754.0px" width="15" height="8" viewBox="0 0 15 8"><path d="M0.6 0.6 L7.5 7.2 L14.4 0.6" fill="none" stroke="#a8a8a8" stroke-width="1.3"/></svg>
<div class="a" style="left:0;top:767.8px;width:538px;height:70px;background:#1a1a1a"></div>
<div class="nb" style="transform:scaleX(0.9896);transform-origin:0 0;left:33.5px;top:782.6px;font-size:21px">Mute Panelists</div>
<div class="nb" style="transform:scaleX(0.9886);transform-origin:0 0;left:212.8px;top:782.6px;font-size:21px">Unmute Panelists</div>
<div class="a" style="left:513.0px;top:791.0px;width:2.4px;height:2.4px;border-radius:50%;background:#fff"></div>
<div class="a" style="left:519.0px;top:791.0px;width:2.4px;height:2.4px;border-radius:50%;background:#fff"></div>
<div class="a" style="left:525.0px;top:791.0px;width:2.4px;height:2.4px;border-radius:50%;background:#fff"></div>
</div>
<!-- CONTROLS -->
<div id="controls">
<svg style="left:52px;top:952.2px" width="26.2" height="22" viewBox="0 0 28 23"><path d="M5.5 1 H22.5 A4.5 4.5 0 0 1 27 5.5 V15 A4.5 4.5 0 0 1 22.5 19.5 H10 C8 19.5 6 22.4 2.6 22.4 C1.4 22.4 0.8 21.4 1.8 20.6 C2.8 20 3 19 2.6 18.4 A4.5 4.5 0 0 1 1 15 V5.5 A4.5 4.5 0 0 1 5.5 1Z" fill="none" stroke="#fff" stroke-width="1.7"/></svg>
<div class="a" style="left:58px;top:957.3px;font-size:9.6px;line-height:1;font-weight:bold;letter-spacing:0.1px;color:#fff">CC</div>
<svg style="left:94.3px;top:957.8px" width="15.6" height="9" viewBox="0 0 15.6 9"><path d="M0.6 0.6 L7.8 8 L15 0.6" fill="none" stroke="#fff" stroke-width="1.5"/></svg>
<div class="pill" style="left:418.3px;width:200.0px"></div>
<svg style="left:440px;top:951px" width="26" height="27" viewBox="0 0 26 27"><rect x="8.6" y="1" width="8.4" height="15" rx="4.2" fill="none" stroke="#f28a93" stroke-width="1.5"/><path d="M4.6 11.5 C4.6 17 8.2 19.6 12.8 19.6 C15.4 19.6 17.4 18.8 18.8 17.4 M12.8 19.6 V24.6 M5.5 25 H20 M1.2 1.2 L24.4 25.6" fill="none" stroke="#f28a93" stroke-width="1.5" stroke-linecap="round"/></svg>
<div class="pl" style="transform:scaleX(1.0486);transform-origin:0 0;left:481.0px;top:955.2px;font-size:23.5px">Unmute</div>
<svg style="left:589.3px;top:960.0px" width="15.7" height="9" viewBox="0 0 15.7 9"><path d="M0.6 0.6 L7.9 8 L15.1 0.6" fill="none" stroke="#fff" stroke-width="1.5"/></svg>
<div class="pill" style="left:637.3px;width:226.7px"></div>
<svg style="left:659px;top:952px" width="27" height="25" viewBox="0 0 27 25"><rect x="1" y="3" width="18.4" height="18.6" rx="4.6" fill="none" stroke="#f28a93" stroke-width="1.5"/><path d="M19.4 10 L24 6.6 Q26 5.6 26 7.8 V16.8 Q26 19 24 18 L19.4 14.6 M1.6 1 L24.6 24" fill="none" stroke="#f28a93" stroke-width="1.5" stroke-linecap="round"/></svg>
<div class="pl" style="transform:scaleX(1.0503);transform-origin:0 0;left:699.3px;top:955.2px;font-size:23.5px">Start video</div>
<svg style="left:835.7px;top:960.0px" width="15.0" height="9" viewBox="0 0 15.0 9"><path d="M0.6 0.6 L7.5 8 L14.4 0.6" fill="none" stroke="#fff" stroke-width="1.5"/></svg>
<div class="pill" style="left:883.3px;width:138.4px"></div>
<svg style="left:900px;top:954px" width="26" height="21" viewBox="0 0 26 21"><rect x="0.8" y="0.8" width="24.4" height="19" rx="4.5" fill="none" stroke="#fff" stroke-width="1.5"/><path d="M13 15.2 V5.6 M8.8 9.6 L13 5.4 L17.2 9.6" fill="none" stroke="#fff" stroke-width="1.5"/></svg>
<div class="pl" style="transform:scaleX(0.9726);transform-origin:0 0;left:940.7px;top:955.2px;font-size:23.5px">Share</div>
<div class="pill" style="left:1040.7px;width:156.6px"></div>
<svg style="left:1057px;top:951px" width="26" height="26" viewBox="0 0 26 26"><circle cx="13" cy="13" r="12" fill="none" stroke="#fff" stroke-width="1.5"/><circle cx="13" cy="13" r="3.6" fill="none" stroke="#fff" stroke-width="1.5"/></svg>
<div class="pl" style="transform:scaleX(0.9688);transform-origin:0 0;left:1098.3px;top:955.2px;font-size:23.5px">Record</div>
<div class="pill" style="left:1216.2px;width:125.8px"></div>
<svg style="left:1238px;top:951px" width="16.4" height="26.2" viewBox="0 0 16.4 26.2"><path d="M1 19 V5.6 A1.6 1.6 0 0 1 4.2 5.6 V3 A1.6 1.6 0 0 1 7.4 3 V2.6 A1.6 1.6 0 0 1 10.6 2.6 V3.8 A1.5 1.5 0 0 1 13.6 3.8 V11.4 C14.2 10.2 15.6 10.4 15.5 12 V18.4 C15.5 22.6 12.4 25.3 8.2 25.3 C4 25.3 1 22.6 1 19Z" fill="none" stroke="#fff" stroke-width="1.5" stroke-linejoin="round"/><path d="M4.2 5.6 V11.4 M7.4 3 V11.4 M10.6 3 V11.4" stroke="#fff" stroke-width="1.3"/><path d="M12.6 12.4 C10.2 14.4 10.8 17 8.2 19.4" fill="none" stroke="#fff" stroke-width="1.5" stroke-linecap="round"/></svg>
<div class="a" style="left:1279px;top:947.5px;width:1.3px;height:33px;background:#4a4a4a"></div>
<svg style="left:1298px;top:950px" width="30" height="29" viewBox="0 0 30 29"><path d="M17.6 2.5 A12.2 12.2 0 1 0 26.2 11.6" fill="none" stroke="#fff" stroke-width="1.6" stroke-linecap="round"/><circle cx="10.2" cy="12" r="1.6" fill="#fff"/><circle cx="18" cy="12" r="1.6" fill="#fff"/><path d="M7.8 17.2 C9.8 21.6 18.4 21.6 20.4 17.2" fill="none" stroke="#fff" stroke-width="1.6" stroke-linecap="round"/><path d="M22.6 1 V10 M18.1 5.5 H27.1" stroke="#fff" stroke-width="1.6"/></svg>
<div class="pill" style="left:1360px;width:59px"></div>
<div class="a" style="left:1382.3px;top:962.2px;width:2.5px;height:2.5px;border-radius:50%;background:#fff"></div>
<div class="a" style="left:1388.4px;top:962.2px;width:2.5px;height:2.5px;border-radius:50%;background:#fff"></div>
<div class="a" style="left:1394.6px;top:962.2px;width:2.5px;height:2.5px;border-radius:50%;background:#fff"></div>
<div class="a" style="left:1438.3px;top:934.3px;width:59.4px;height:59.4px;border-radius:50%;background:#db2135"></div>
<svg style="left:1459px;top:955px" width="18" height="18" viewBox="0 0 18 18"><path d="M0.8 0.8 L17.2 17.2 M17.2 0.8 L0.8 17.2" stroke="#ffdfe2" stroke-width="1.7"/></svg>
<svg style="left:1551px;top:952px" width="25" height="24" viewBox="0 0 25 24"><rect x="0.8" y="1.8" width="8.6" height="8.6" rx="2" fill="none" stroke="#fff" stroke-width="1.5"/><rect x="0.8" y="14.2" width="8.6" height="8.6" rx="2" fill="none" stroke="#fff" stroke-width="1.5"/><rect x="13.6" y="14.2" width="8.6" height="8.6" rx="2" fill="none" stroke="#fff" stroke-width="1.5"/><path d="M18.6 0.6 V10 M13.8 5.4 H23.4" stroke="#fff" stroke-width="1.5"/></svg>
<div class="pl" style="transform:scaleX(0.9817);transform-origin:0 0;left:1590.7px;top:955.2px;font-size:23.5px">Apps</div>
<div class="a" style="left:1683.5px;top:934.5px;width:59px;height:59px;border-radius:50%;background:#333"></div>
<svg style="left:1700px;top:951px" width="28" height="27" viewBox="0 0 28 27"><circle cx="11.4" cy="6" r="5.4" fill="#fff"/><path d="M1.2 22 C1.2 16 5 13.2 11.4 13.2 C13.4 13.2 15 13.6 16.2 14.2 H13.6 V24.6 H3 C1.8 24.6 1.2 23.6 1.2 22Z" fill="#fff"/><path d="M16.4 16.6 H26.6 M16.4 20.4 H26.6 M16.4 24.2 H26.6" stroke="#fff" stroke-width="2"/></svg>
<div class="a" style="left:1759px;top:932px;width:64px;height:64px;border-radius:50%;border:1.6px solid #5b9fe0;background:#000"></div>
<svg style="left:1777px;top:950px" width="28" height="28" viewBox="0 0 28 28"><path d="M14.4 2.4 A11.6 11 0 1 1 8.4 23.2 L2.8 25.2 L4.6 19.8 A11.6 11 0 0 1 14.4 2.4Z" fill="none" stroke="#fff" stroke-width="1.7" stroke-linejoin="round"/></svg>
<div class="a" style="left:1861.6px;top:962.8px;width:2.3px;height:2.3px;border-radius:50%;background:#e8e8e8"></div>
<div class="a" style="left:1867.4px;top:962.8px;width:2.3px;height:2.3px;border-radius:50%;background:#e8e8e8"></div>
<div class="a" style="left:1873.2px;top:962.8px;width:2.3px;height:2.3px;border-radius:50%;background:#e8e8e8"></div>
</div>
<!-- TASKBAR -->
<div id="tb">
<div class="a" style="left:31.7px;top:19.7px;width:30px;height:30px;border-radius:50%;background:radial-gradient(circle at 35% 30%,#fbbf3a 0%,#f59a1f 45%,#ea5d0e 100%)"></div>
<div class="a" style="letter-spacing:0.005px;left:76px;top:15.5px;font-size:17px;line-height:1;color:#fff">25°C</div>
<div class="a" style="letter-spacing:0.449px;left:76px;top:39.5px;font-size:17px;line-height:1;color:#d9dcdb">Sunny</div>
<svg style="left:510px;top:19.7px" width="35" height="35" viewBox="0 0 35 35"><defs><linearGradient id="wl" x1="0" y1="0" x2="1" y2="1"><stop offset="0" stop-color="#7fdcfd"/><stop offset="1" stop-color="#1190df"/></linearGradient></defs><path d="M0 0 H16.6 V16.6 H0Z M18.4 0 H35 V16.6 H18.4Z M0 18.4 H16.6 V35 H0Z M18.4 18.4 H35 V35 H18.4Z" fill="url(#wl)"/></svg>
<div class="a" style="left:565px;top:12.0px;width:330px;height:47.7px;border-radius:24px;background:linear-gradient(90deg,rgba(120,140,150,.28),rgba(130,135,190,.30));border:1px solid rgba(255,255,255,.13)"></div>
<svg style="left:581px;top:23.5px" width="26" height="26" viewBox="0 0 26 26"><circle cx="11" cy="11" r="8.6" fill="none" stroke="#e6e8ea" stroke-width="2.2"/><path d="M17.4 17.6 L23.4 23.8" stroke="#e6e8ea" stroke-width="2.6" stroke-linecap="round"/></svg>
<div class="a" style="letter-spacing:-0.239px;left:621.7px;top:27.3px;font-size:19.5px;line-height:1;color:#dfe3e6">Search</div>
<svg style="left:820px;top:16.0px" width="68" height="42" viewBox="0 0 68 42"><ellipse cx="33.5" cy="28" rx="32" ry="11.5" fill="#e9e6e1"/><ellipse cx="33.5" cy="27" rx="29" ry="9.5" fill="#f7f5f1"/><path d="M9 10 C5 11 3 15 5 18 C8 22 15 20 17 16 Z" fill="#7db343"/><path d="M12 8 C16 6 21 8 20 14 L12 18Z" fill="#5e9a32"/><path d="M12 27 L27 4 L62 14 C64 15 64 17 62 18 L20 32 C15 33 11 31 12 27Z" fill="#6b3d1f"/><path d="M27 4 L62 14 C64 15 64 17 62 18 L58 17 L27 8Z" fill="#d9a66a"/><path d="M13 26 L58 17 L60 19 L20 32 C15 33 12 30 13 26Z" fill="#e8c79a"/><path d="M14 25 L27 6 L56 15 L57 17Z" fill="#7b4826"/><circle cx="30" cy="13" r="1.8" fill="#d9a66a"/><circle cx="38" cy="15" r="1.8" fill="#d9a66a"/><circle cx="45" cy="14" r="1.6" fill="#d9a66a"/><circle cx="27" cy="20" r="1.8" fill="#d9a66a"/><circle cx="35" cy="20" r="1.5" fill="#d9a66a"/><circle cx="45" cy="31" r="3.4" fill="#b0743a"/><circle cx="50.5" cy="28.5" r="3" fill="#c98a4a"/></svg>
<div class="a" style="left:912.7px;top:29.0px;width:27px;height:23px;border-radius:3px;background:#5d5d60"></div>
<div class="a" style="left:924.5px;top:19.7px;width:25px;height:23.5px;border-radius:3px;background:linear-gradient(135deg,#fafafa,#d6d6d8)"></div>
<svg style="left:978px;top:17.0px" width="37" height="38" viewBox="0 0 37 38"><defs><linearGradient id="tg" x1="0" y1="0" x2="1" y2="1"><stop offset="0" stop-color="#9a8df0"/><stop offset="1" stop-color="#5a55c4"/></linearGradient></defs><path d="M18.5 1 A17 17 0 1 1 9 32.4 L2 36 L3.6 27 A17 17 0 0 1 18.5 1Z" fill="url(#tg)"/><rect x="9" y="12" width="13.6" height="12" rx="2.6" fill="#fff"/><path d="M23.6 16.4 L28.4 13 V23 L23.6 19.6Z" fill="#fff"/></svg>
<svg style="left:1046.7px;top:20.0px" width="32" height="32" viewBox="0 0 32 32"><rect x="11" y="7" width="21" height="19" rx="1.5" fill="#1a7ad6"/><path d="M11.5 8 L21.5 16.5 L31.5 8 V25 H11.5Z" fill="#dfeefc"/><path d="M11.5 8.6 L21.5 17 L31.5 8.6" fill="none" stroke="#2f8fe8" stroke-width="1.6"/><path d="M0 3.6 L17.4 0 V32 L0 28.4Z" fill="#0f62b6"/><ellipse cx="8.8" cy="16" rx="4.3" ry="5.4" fill="none" stroke="#fff" stroke-width="2.6"/></svg>
<div class="a" style="left:1059px;top:60.3px;width:9.3px;height:4px;border-radius:2px;background:#8d8d93"></div>
<svg style="left:1111px;top:17.0px" width="37" height="37" viewBox="0 0 37 37"><defs><linearGradient id="eg" x1="0" y1="0" x2="1" y2="0.6"><stop offset="0" stop-color="#1b8fd8"/><stop offset="0.55" stop-color="#2bc3d0"/><stop offset="1" stop-color="#6fdc5a"/></linearGradient><linearGradient id="eg2" x1="0" y1="0" x2="0.6" y2="1"><stop offset="0" stop-color="#1373c7"/><stop offset="1" stop-color="#0c4a9a"/></linearGradient></defs><circle cx="18.5" cy="18.5" r="18" fill="url(#eg)"/><path d="M1 20 C2 10 10 6.5 17 7 C26 7.6 30 14 28.6 19 C27.6 22.4 23 23.4 21 21.6 C22.6 19 21.6 15 17.4 14.6 C12 14.2 8.6 19 10 25 C11.6 31.4 18 35 25 33.4 C21 37 13 37.6 7.4 33 C3 29.4 0.6 25 1 20Z" fill="url(#eg2)"/></svg>
<div class="a" style="left:1124.7px;top:60.3px;width:9.3px;height:4px;border-radius:2px;background:#8d8d93"></div>
<svg style="left:1176.7px;top:19.5px" width="37" height="34" viewBox="0 0 37 34"><defs><linearGradient id="fg" x1="0" y1="0" x2="0" y2="1"><stop offset="0" stop-color="#ffd95a"/><stop offset="1" stop-color="#f7b72a"/></linearGradient></defs><path d="M0 3 Q0 1 2 1 H11 Q12.6 1 13.6 2.4 L15 4.4 H0Z" fill="#e8a61c"/><rect x="0" y="3.4" width="37" height="30" rx="2.4" fill="url(#fg)"/><path d="M7 33.4 V26 Q7 22.4 10.6 22.4 H26.4 Q30 22.4 30 26 V33.4Z" fill="#1b7fd0"/><path d="M12 27.6 H25" stroke="#0f5fa8" stroke-width="1.6" stroke-linecap="round"/></svg>
<div class="a" style="left:1191px;top:60.3px;width:9.3px;height:4px;border-radius:2px;background:#8a80a6"></div>
<svg style="left:1242.8px;top:18.7px" width="36" height="36" viewBox="0 0 36 36"><path d="M9.4 8 V3.4 Q9.4 1 11.8 1 H24.2 Q26.6 1 26.6 3.4 V8" fill="none" stroke="#2f9be8" stroke-width="2"/><path d="M0.6 6 Q0.6 4.6 2 4.6 H34 Q35.4 4.6 35.4 6 V30 Q35.4 35.4 30 35.4 H6 Q0.6 35.4 0.6 30Z" fill="#f3f3f5"/><rect x="10.4" y="12.4" width="7" height="7" fill="#f25022"/><rect x="18.6" y="12.4" width="7" height="7" fill="#7fba00"/><rect x="10.4" y="20.6" width="7" height="7" fill="#00a4ef"/><rect x="18.6" y="20.6" width="7" height="7" fill="#ffb900"/></svg>
<svg style="left:1308px;top:16.5px" width="38" height="38" viewBox="0 0 38 38"><defs><radialGradient id="ffg" cx="0.6" cy="0.2" r="0.95"><stop offset="0" stop-color="#ffe04a"/><stop offset="0.35" stop-color="#ffa322"/><stop offset="0.7" stop-color="#ff5a2c"/><stop offset="1" stop-color="#e5215a"/></radialGradient></defs><path d="M24 1 C26 4 29 6 31.6 9.4 C35.4 14 36 20 34.6 25 C32.4 32.4 25.6 37 18.6 37 C9 37 2 29.6 2 21 C2 16 3.6 12.4 5.6 10 C6 12 6.6 13 7.6 14 C8.6 11 11 8.6 13.6 8 C14.6 10 16.6 11 19 11 C20.6 8 21 4 24 1Z" fill="url(#ffg)"/><circle cx="19.6" cy="22" r="7.6" fill="#7a3fd8"/><path d="M12 20 C14 15.6 20 14.6 24 17 C20 16.6 17 18.6 17 22 C17 25 19.6 27.4 23 27 C19 30 12.6 27.6 12 20Z" fill="#ff8a2a"/></svg>
<div class="a" style="left:1323px;top:60.3px;width:9.3px;height:4px;border-radius:2px;background:#8a80a6"></div>
<div class="a" style="left:1363.3px;top:6.7px;width:59.2px;height:58.6px;border-radius:7px;background:rgba(255,255,255,.085);border:1px solid rgba(255,255,255,.06)"></div>
<div class="a" style="left:1375px;top:17.8px;width:35.8px;height:35.9px;border-radius:8px;background:linear-gradient(180deg,#1c1c1e,#050506)"></div>
<svg style="left:1376px;top:22.3px" width="34" height="26.2" viewBox="0 0 26 20"><ellipse cx="17.6" cy="10" rx="5.3" ry="7.1" fill="none" stroke="#2f62f0" stroke-width="3.9" transform="rotate(-6 17.6 10)"/><path d="M15.8 3.4 C19.6 1.6 22.8 4.2 23.2 8.2" fill="none" stroke="#3fc06a" stroke-width="3.9"/><ellipse cx="8.2" cy="10.2" rx="5.2" ry="7.1" fill="none" stroke="url(#wg)" stroke-width="3.9" transform="rotate(-8 8.2 10.2)"/></svg>
<div class="a" style="left:1395.8px;top:39.0px;width:15px;height:14.7px;border-radius:2px 5px 7px 2px;background:#f4f6f5"></div>
<svg style="left:1398.4px;top:42.4px" width="11" height="8" viewBox="0 0 11 8"><rect x="0" y="0" width="7.4" height="8" rx="1.8" fill="#2fa565"/><path d="M7.8 2.8 L11 0.8 V7.2 L7.8 5.2Z" fill="#2fa565"/></svg>
<div class="a" style="left:1381px;top:60.0px;width:24px;height:4.6px;border-radius:2.3px;background:#dba0ea"></div>
<svg style="left:1482.3px;top:31.0px" width="17.4" height="10.4" viewBox="0 0 17.4 10.4"><path d="M1 9.4 L8.7 1.6 L16.4 9.4" fill="none" stroke="#fff" stroke-width="2.1" stroke-linecap="round" stroke-linejoin="round"/></svg>
<div class="a" style="left:1515.6px;top:6.4px;width:47px;height:58.6px;border-radius:6px;background:rgba(255,255,255,.10);border:1px solid rgba(255,255,255,.07)"></div>
<svg style="left:1526.5px;top:22.5px" width="25" height="27" viewBox="0 0 25 27"><rect x="8.6" y="1.4" width="8" height="13.6" rx="4" fill="#fff"/><path d="M5 11.6 C5 16.6 8.4 19 12.6 19 C16.8 19 20.2 16.6 20.2 11.6 M12.6 19 V24.4 M8 24.6 H17.2" fill="none" stroke="#fff" stroke-width="1.7" stroke-linecap="round"/><path d="M1.6 1.4 L23.6 25" stroke="#3a2850" stroke-width="4.2"/><path d="M1.6 1.4 L23.6 25" stroke="#fff" stroke-width="1.7" stroke-linecap="round"/></svg>
<div class="a" style="letter-spacing:-1.272px;left:1579px;top:16.9px;font-size:17px;line-height:1;color:#fff">ENG</div>
<div class="a" style="letter-spacing:1.000px;left:1587px;top:40.2px;font-size:17px;line-height:1;color:#fff">IN</div>
<svg style="left:1640.5px;top:23.5px" width="25" height="25" viewBox="0 0 25 25"><path d="M15 1.4 H2.6 Q1 1.4 1 3 V16 Q1 17.6 2.6 17.6 H17.4" fill="none" stroke="#fff" stroke-width="1.7"/><path d="M5.6 23 H17.4 M9 17.6 V23 M13 17.6 V23" stroke="#fff" stroke-width="1.7"/><rect x="18.6" y="1.6" width="5" height="8" rx="1.6" fill="none" stroke="#fff" stroke-width="1.5"/><path d="M21.1 9.6 V24" stroke="#fff" stroke-width="1.6"/></svg>
<svg style="left:1676.5px;top:25.0px" width="25" height="22" viewBox="0 0 25 22"><path d="M1 7.6 H5 L10.4 2 V20 L5 14.4 H1Z" fill="none" stroke="#fff" stroke-width="1.6" stroke-linejoin="round"/><path d="M13.6 7.4 Q15.6 11 13.6 14.6 M16.8 4.6 Q20.4 11 16.8 17.4 M20 1.8 Q25.4 11 20 20.2" fill="none" stroke="#fff" stroke-width="1.6" stroke-linecap="round"/></svg>
<svg style="left:1712.5px;top:24.0px" width="26" height="20" viewBox="0 0 26 20"><rect x="1.4" y="6.4" width="20.6" height="12.4" rx="3" fill="none" stroke="#fff" stroke-width="1.7"/><rect x="4.2" y="9.2" width="15" height="6.8" rx="1.4" fill="#fff"/><path d="M23.4 10 V15.2" stroke="#fff" stroke-width="2.4" stroke-linecap="round"/><path d="M6.4 0.6 L1.6 7.4 H5.2 L3.6 12 L9 5 H5.4Z" fill="#fff" stroke="#2a1540" stroke-width="0.8"/></svg>
<div class="a" style="letter-spacing:0.155px;left:1812.2px;top:15.4px;font-size:17px;line-height:1;color:#fff">11:52</div>
<div class="a" style="letter-spacing:0.581px;left:1761.9px;top:39.8px;font-size:17px;line-height:1;color:#fff">07-02-2024</div>
<svg style="left:1867.5px;top:25.0px" width="21" height="24" viewBox="0 0 21 24"><path d="M10.5 0.6 C5.6 0.6 3 4.4 3 8.6 V13.4 L0.8 17 Q0.4 18.4 1.8 18.4 H19.2 Q20.6 18.4 20.2 17 L18 13.4 V8.6 C18 4.4 15.4 0.6 10.5 0.6Z" fill="#e6b3f2"/><path d="M7.4 20 A3.2 3.2 0 0 0 13.6 20Z" fill="#e6b3f2"/></svg>
</div>

</body>
</html>
